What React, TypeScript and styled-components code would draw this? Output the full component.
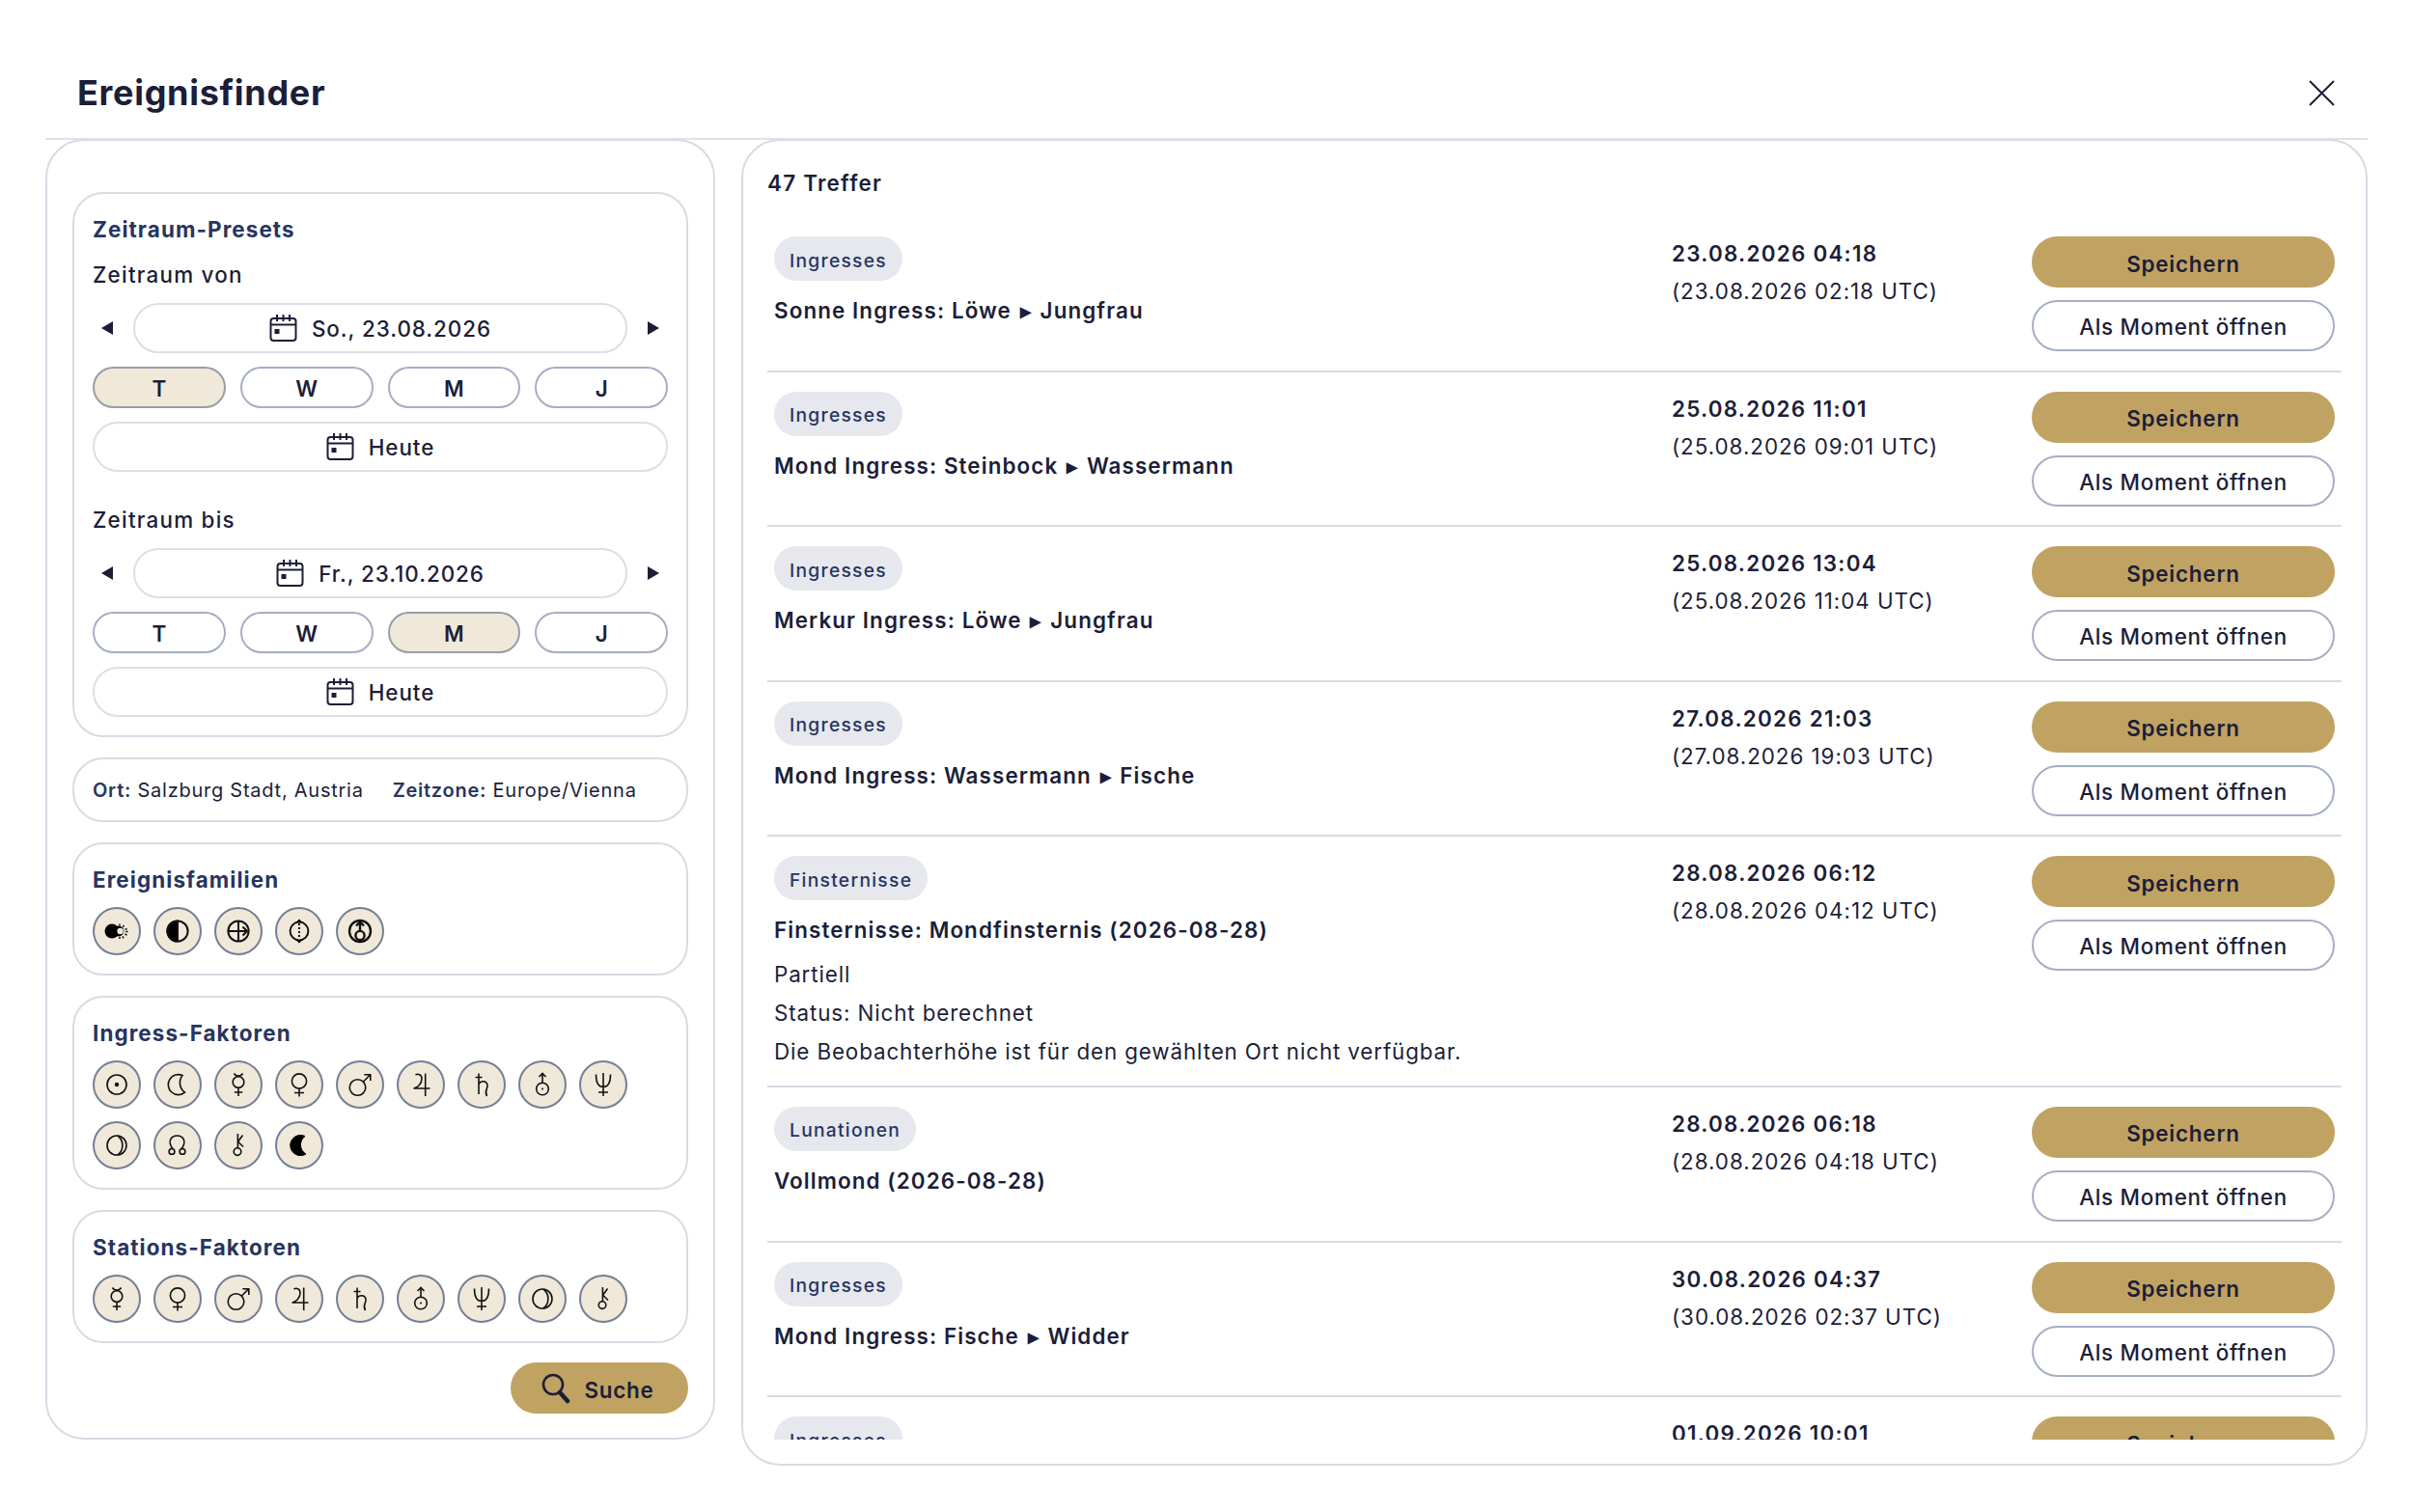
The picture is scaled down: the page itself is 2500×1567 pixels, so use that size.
import React from "react";
import styled, { createGlobalStyle } from "styled-components";

const Global = createGlobalStyle`
  html, body { margin: 0; padding: 0; background: #fff; }
  body { font-family: Inter, "Liberation Sans", sans-serif; color: #1c1e38; -webkit-font-smoothing: antialiased; }
  * { box-sizing: border-box; }
`;

const Page = styled.div`
  width: 2500px;
  height: 1567px;
  padding: 0 47px;
  display: flex;
  flex-direction: column;
  background: #fff;
`;
const Header = styled.header`
  height: 145px;
  flex: none;
  display: flex;
  align-items: center;
  justify-content: space-between;
  padding: 49px 34px 0 33px;
  border-bottom: 2px solid #dfe2e9;
  margin-bottom: -1px;
`;
const Title = styled.h1`
  margin: 0;
  font-size: 36px;
  font-weight: 700;
  letter-spacing: 0.7px;
  color: #1c1e38;
`;
const CloseButton = styled.button`
  border: 0;
  padding: 0;
  background: none;
  width: 27px;
  height: 27px;
  display: block;
  svg { display: block; }
`;
const Columns = styled.div`
  display: flex;
  gap: 27px;
  align-items: flex-start;
  flex: none;
`;
const Panel = styled.div`
  background: #fff;
  border: 2px solid #d8dbe5;
  border-radius: 40px;
`;
const LeftPanel = styled(Panel)`
  width: 694px;
  height: 1348px;
  padding: 53px 26px 25px;
  display: flex;
  flex-direction: column;
  gap: 21px;
`;
const RightPanel = styled(Panel)`
  width: 1685px;
  height: 1375px;
  padding: 0 25px 25px;
  display: flex;
  flex-direction: column;
`;
const Card = styled.section`
  border: 2px solid #d8dbe5;
  border-radius: 32px;
  padding: 19px 19px 19px;
`;
const SectionLabel = styled.div`
  font-size: 22.4px;
  line-height: 36px;
  font-weight: 700;
  letter-spacing: 1.1px;
  color: #273560;
`;
const FieldLabel = styled.div<{ $top?: number }>`
  font-size: 22.4px;
  line-height: 36px;
  font-weight: 500;
  letter-spacing: 1.25px;
  margin-top: ${(p) => p.$top ?? 11}px;
  color: #1c1e38;
`;
const DateRow = styled.div`
  display: grid;
  grid-template-columns: 42px 1fr 42px;
  align-items: center;
  height: 52px;
  margin: 11px 0 14px;
`;
const Arrow = styled.button<{ $side: "l" | "r" }>`
  border: 0;
  padding: 0 9px;
  background: none;
  display: flex;
  justify-content: ${(p) => (p.$side === "l" ? "flex-start" : "flex-end")};
  svg { display: block; }
`;
const Pill = styled.button`
  height: 52px;
  width: 100%;
  border: 2px solid #dcdfe8;
  border-radius: 26px;
  background: #fff;
  display: flex;
  align-items: center;
  justify-content: center;
  gap: 15px;
  padding-top: 1px;
  font: 500 22.4px Inter, sans-serif;
  letter-spacing: 0.95px;
  color: #1c1e38;
  svg { display: block; flex: none; margin-top: -2px; }
`;
const Scale = styled.div`
  display: grid;
  grid-template-columns: repeat(4, 1fr);
  gap: 15px;
  margin-bottom: 14px;
`;
const ScaleButton = styled.button<{ $active?: boolean }>`
  height: 43px;
  border: 2px solid ${(p) => (p.$active ? "#9a9da8" : "#a6aec6")};
  border-radius: 22px;
  background: ${(p) => (p.$active ? "#f0e9d9" : "#fff")};
  font: 600 22.4px Inter, sans-serif;
  color: #1c1e38;
  padding-top: 2px;
`;
const InfoCard = styled(Card)`
  height: 70px;
  padding: 0 19px;
  display: flex;
  align-items: center;
  gap: 30px;
  font-size: 20px;
  letter-spacing: 0.75px;
  white-space: nowrap;
  color: #1c1e38;
  b { font-weight: 600; color: #273560; }
`;
const Glyphs = styled.div`
  display: flex;
  flex-wrap: wrap;
  gap: 13px;
  margin-top: 10px;
`;
const GlyphButton = styled.button`
  width: 50px;
  height: 50px;
  padding: 0;
  border: 2px solid #767e96;
  border-radius: 50%;
  background: #f0e9d9;
  display: flex;
  align-items: center;
  justify-content: center;
  svg { display: block; flex: none; }
`;
const SearchRow = styled.div`
  display: flex;
  justify-content: flex-end;
  margin-top: -1px;
`;
const SearchButton = styled.button`
  width: 184px;
  height: 53px;
  border: 0;
  border-radius: 27px;
  background: #c0a362;
  display: flex;
  align-items: center;
  justify-content: center;
  gap: 15px;
  padding: 0 4px 0 0;
  font: 600 22.4px Inter, sans-serif;
  letter-spacing: 0.7px;
  color: #1c1e38;
  span { padding-top: 3px; }
  svg { display: block; }
`;
const HitCount = styled.div`
  height: 79px;
  flex: none;
  display: flex;
  align-items: center;
  padding-top: 7px;
  font-size: 22.4px;
  font-weight: 600;
  letter-spacing: 1.25px;
  color: #1c1e38;
`;
const List = styled.div`
  flex: 1;
  min-height: 0;
  overflow: hidden;
`;
const Row = styled.article`
  display: grid;
  grid-template-columns: 1fr 373px 314px;
  padding: 20px 7px 19.6px;
  border-bottom: 2px solid #d8dbe5;
`;
const Badge = styled.span`
  display: inline-flex;
  align-items: center;
  height: 46px;
  padding: 3px 16px 0;
  border-radius: 23px;
  background: #e6e8ee;
  font-size: 19.2px;
  font-weight: 500;
  letter-spacing: 1.3px;
  color: #273560;
`;
const EventTitle = styled.div`
  font-size: 22.4px;
  line-height: 34px;
  font-weight: 600;
  letter-spacing: 1.1px;
  margin-top: 14px;
`;
const ArrowGlyph = styled.span`
  padding: 0 2px;
  font-size: 22px;
`;
const Details = styled.div`
  font-size: 22.4px;
  line-height: 40px;
  letter-spacing: 0.87px;
  margin: 9px 0 -5px;
`;
const LocalTime = styled.div`
  font-size: 22.4px;
  line-height: 34px;
  font-weight: 600;
  letter-spacing: 1.25px;
  margin-top: 1px;
`;
const UtcTime = styled.div`
  font-size: 22.4px;
  line-height: 34px;
  letter-spacing: 0.95px;
  margin-top: 5px;
`;
const Actions = styled.div`
  display: flex;
  flex-direction: column;
  gap: 13px;
`;
const SaveButton = styled.button`
  height: 53px;
  border: 0;
  border-radius: 27px;
  background: #c0a362;
  padding-top: 4px;
  font: 600 22.4px Inter, sans-serif;
  letter-spacing: 0.8px;
  color: #1c1e38;
`;
const OpenButton = styled.button`
  height: 53px;
  border: 2px solid #a6aec6;
  border-radius: 27px;
  background: #fff;
  padding-top: 3px;
  font: 500 22.4px Inter, sans-serif;
  letter-spacing: 0.73px;
  color: #1c1e38;
`;

const CalendarIcon = () => (
  <svg width="29" height="29" viewBox="0 0 29 29" fill="none" stroke="#1c1e38" strokeWidth="2">
    <rect x="1.5" y="5" width="26" height="23" rx="3" />
    <path d="M1.5 11.5H27.5M8 1V8M14.5 1V8M21 1V8" />
    <rect x="5.5" y="16" width="5" height="5" fill="#1c1e38" stroke="none" />
  </svg>
);
const Tri = ({ dir }: { dir: "l" | "r" }) => (
  <svg width="12" height="14" viewBox="0 0 12 14" fill="#1c1e38">
    <path d={dir === "l" ? "M12 0V14L0 7Z" : "M0 0V14L12 7Z"} />
  </svg>
);

const G = ({ children, sw = 1.6 }: { children: React.ReactNode; sw?: number }) => (
  <svg width="46" height="46" viewBox="2 2 46 46" fill="none" stroke="#111" strokeWidth={sw}>
    {children}
  </svg>
);

const icons: Record<string, React.ReactNode> = {
  eclipse: (
    <G sw={2}>
      <circle cx="20" cy="25" r="7.5" fill="#000" stroke="none" />
      <circle cx="27" cy="25" r="5.4" fill="#000" stroke="none" />
      <circle cx="28.6" cy="25" r="3.2" fill="#f0e9d9" stroke="none" />
      <path d="M28 17.5V19.5M32.5 19L31.3 20.7M35.5 22.5L33.5 23.4M36.5 25.5H34.2M35.5 29.2L33.5 28M32 32.3L31 30.4M28 33V31" strokeWidth="1.5" />
    </G>
  ),
  half: (
    <G sw={2}>
      <circle cx="25" cy="25" r="10.6" />
      <path d="M25 14.4A10.6 10.6 0 0 0 25 35.6Z" fill="#000" />
    </G>
  ),
  ingress: (
    <G sw={2}>
      <circle cx="25" cy="25" r="10.6" />
      <path d="M25 14.4V35.6M14.4 25H34M29.5 20.5L34 25L29.5 29.5" />
    </G>
  ),
  station: (
    <G sw={2}>
      <circle cx="25" cy="25" r="9.4" />
      <path d="M25 17V33" strokeDasharray="2 2" />
      <path d="M25 12.5L28 15.6H22ZM25 37.5L28 34.4H22Z" fill="#000" stroke="none" />
    </G>
  ),
  retro: (
    <G sw={2.4}>
      <circle cx="25" cy="25" r="11" />
      <circle cx="25" cy="29.5" r="4.6" />
      <path d="M25 25V16M21 19.5L25 15.5L29 19.5" />
    </G>
  ),
  sun: (
    <G>
      <circle cx="25" cy="25" r="10" />
      <circle cx="25" cy="25" r="2.2" fill="#111" stroke="none" />
    </G>
  ),
  moon: (
    <G>
      <path d="M30 15.5A10.5 10.5 0 1 0 32.5 33.2A12.5 12.5 0 0 1 30 15.5Z" />
    </G>
  ),
  mercury: (
    <G>
      <path d="M20.5 13.5A5.2 5.2 0 0 0 29.5 13.5" />
      <circle cx="25" cy="22.5" r="5.8" />
      <path d="M25 28.3V37M20.8 33H29.2" />
    </G>
  ),
  venus: (
    <G>
      <circle cx="25" cy="21.5" r="7.6" />
      <path d="M25 29V37.5M20 33.5H30" />
    </G>
  ),
  mars: (
    <G>
      <circle cx="22.5" cy="28" r="8.3" />
      <path d="M28.4 22L35.5 15M29.3 14.7H35.8V21" />
    </G>
  ),
  jupiter: (
    <G>
      <path d="M19.5 15C22 13.5 26 14.5 26 19C26 24 21.5 28.5 17.5 29H34.5M29.7 13.5V37" />
    </G>
  ),
  saturn: (
    <G>
      <path d="M18.5 17.5H25.5M22 13.5V35M22 24.5C24 20.5 31 20.5 31 26.5C31 30 27.5 32 30.5 37" />
    </G>
  ),
  uranus: (
    <G>
      <circle cx="25" cy="29.5" r="6.3" />
      <circle cx="25" cy="29.5" r="1" fill="#111" stroke="none" />
      <path d="M25 23V13.5M21.5 17L25 13.5L28.5 17" />
    </G>
  ),
  neptune: (
    <G>
      <path d="M17.5 14.5C17.5 24 20 27.5 25 27.5C30 27.5 32.5 24 32.5 14.5M25 13V37M20 33H30" />
    </G>
  ),
  pluto: (
    <G>
      <circle cx="25" cy="25" r="10" />
      <path d="M26 15C32.5 20 32.5 30 26 35" />
    </G>
  ),
  node: (
    <G>
      <path d="M20.5 29C17 25.5 16.3 21 18 18.3C19.5 15.7 22 15 24.5 15C27 15 29.5 15.7 31 18.3C32.7 21 32 25.5 28.5 29" />
      <circle cx="19" cy="31.4" r="2.9" />
      <circle cx="30" cy="31.4" r="2.9" />
    </G>
  ),
  chiron: (
    <G>
      <circle cx="24" cy="31.6" r="3.8" />
      <path d="M24.4 27.8V13M24.4 21.5L29.5 14.5M24.4 21L30 26.5" />
    </G>
  ),
  lilith: (
    <G>
      <path d="M31 15.5A10.6 10.6 0 1 0 32 34A11 11 0 0 1 31 15.5Z" fill="#000" stroke="#000" strokeWidth="1" />
    </G>
  ),
};

const GlyphList = ({ names }: { names: string[] }) => (
  <Glyphs>
    {names.map((n, i) => (
      <GlyphButton key={n + i}>{icons[n]}</GlyphButton>
    ))}
  </Glyphs>
);

const DateBlock = ({ date, active }: { date: string; active: string }) => (
  <>
    <DateRow>
      <Arrow $side="l"><Tri dir="l" /></Arrow>
      <Pill><CalendarIcon />{date}</Pill>
      <Arrow $side="r"><Tri dir="r" /></Arrow>
    </DateRow>
    <Scale>
      {["T", "W", "M", "J"].map((k) => (
        <ScaleButton key={k} $active={k === active}>{k}</ScaleButton>
      ))}
    </Scale>
    <Pill><CalendarIcon />Heute</Pill>
  </>
);

type Hit = { tag: string; title?: [string, string?]; lines?: string[]; local: string; utc?: string; open?: boolean };

const hits: Hit[] = [
  { tag: "Ingresses", title: ["Sonne Ingress: Löwe", "Jungfrau"], local: "23.08.2026 04:18", utc: "(23.08.2026 02:18 UTC)", open: true },
  { tag: "Ingresses", title: ["Mond Ingress: Steinbock", "Wassermann"], local: "25.08.2026 11:01", utc: "(25.08.2026 09:01 UTC)", open: true },
  { tag: "Ingresses", title: ["Merkur Ingress: Löwe", "Jungfrau"], local: "25.08.2026 13:04", utc: "(25.08.2026 11:04 UTC)", open: true },
  { tag: "Ingresses", title: ["Mond Ingress: Wassermann", "Fische"], local: "27.08.2026 21:03", utc: "(27.08.2026 19:03 UTC)", open: true },
  {
    tag: "Finsternisse",
    title: ["Finsternisse: Mondfinsternis (2026-08-28)"],
    lines: ["Partiell", "Status: Nicht berechnet", "Die Beobachterhöhe ist für den gewählten Ort nicht verfügbar."],
    local: "28.08.2026 06:12",
    utc: "(28.08.2026 04:12 UTC)",
    open: true,
  },
  { tag: "Lunationen", title: ["Vollmond (2026-08-28)"], local: "28.08.2026 06:18", utc: "(28.08.2026 04:18 UTC)", open: true },
  { tag: "Ingresses", title: ["Mond Ingress: Fische", "Widder"], local: "30.08.2026 04:37", utc: "(30.08.2026 02:37 UTC)", open: true },
  { tag: "Ingresses", local: "01.09.2026 10:01" },
];

export default function App() {
  return (
    <Page>
      <Global />
      <Header>
        <Title>Ereignisfinder</Title>
        <CloseButton aria-label="Schließen">
          <svg width="27" height="27" viewBox="0 0 27 27" stroke="#1c1e38" strokeWidth="2" fill="none">
            <path d="M1 1L26 26M26 1L1 26" />
          </svg>
        </CloseButton>
      </Header>
      <Columns>
        <LeftPanel>
          <Card>
            <SectionLabel>Zeitraum-Presets</SectionLabel>
            <FieldLabel $top={11}>Zeitraum von</FieldLabel>
            <DateBlock date="So., 23.08.2026" active="T" />
            <FieldLabel $top={32}>Zeitraum bis</FieldLabel>
            <DateBlock date="Fr., 23.10.2026" active="M" />
          </Card>
          <InfoCard>
            <span><b>Ort:</b> Salzburg Stadt, Austria</span>
            <span><b>Zeitzone:</b> Europe/Vienna</span>
          </InfoCard>
          <Card>
            <SectionLabel>Ereignisfamilien</SectionLabel>
            <GlyphList names={["eclipse", "half", "ingress", "station", "retro"]} />
          </Card>
          <Card>
            <SectionLabel>Ingress-Faktoren</SectionLabel>
            <GlyphList names={["sun", "moon", "mercury", "venus", "mars", "jupiter", "saturn", "uranus", "neptune", "pluto", "node", "chiron", "lilith"]} />
          </Card>
          <Card>
            <SectionLabel>Stations-Faktoren</SectionLabel>
            <GlyphList names={["mercury", "venus", "mars", "jupiter", "saturn", "uranus", "neptune", "pluto", "chiron"]} />
          </Card>
          <SearchRow>
            <SearchButton>
              <svg width="30" height="32" viewBox="0 0 30 32" fill="none" stroke="#1c1e38">
                <circle cx="12" cy="12" r="10" strokeWidth="2.6" />
                <path d="M19 20L27 29" strokeWidth="4.6" strokeLinecap="round" />
              </svg>
              <span>Suche</span>
            </SearchButton>
          </SearchRow>
        </LeftPanel>
        <RightPanel>
          <HitCount>47 Treffer</HitCount>
          <List>
            {hits.map((h) => (
              <Row key={h.local}>
                <div>
                  <Badge>{h.tag}</Badge>
                  {h.title && (
                    <EventTitle>
                      {h.title[0]}
                      {h.title[1] && (
                        <>
                          {" "}
                          <ArrowGlyph>▸</ArrowGlyph> {h.title[1]}
                        </>
                      )}
                    </EventTitle>
                  )}
                  {h.lines && (
                    <Details>
                      {h.lines.map((l) => (
                        <div key={l}>{l}</div>
                      ))}
                    </Details>
                  )}
                </div>
                <div>
                  <LocalTime>{h.local}</LocalTime>
                  {h.utc && <UtcTime>{h.utc}</UtcTime>}
                </div>
                <Actions>
                  <SaveButton>Speichern</SaveButton>
                  {h.open && <OpenButton>Als Moment öffnen</OpenButton>}
                </Actions>
              </Row>
            ))}
          </List>
        </RightPanel>
      </Columns>
    </Page>
  );
}
